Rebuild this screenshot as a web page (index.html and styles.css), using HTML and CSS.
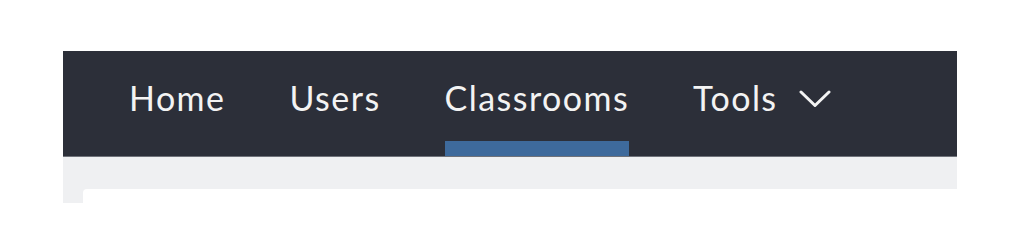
FILE: index.html
```html
<!DOCTYPE html>
<html lang="en">
<head>
<meta charset="utf-8">
<title>Classrooms</title>
<link rel="stylesheet" href="styles.css">
</head>
<body>
<div class="frame">
  <nav class="topnav">
    <a class="nav-item" href="#">Home</a>
    <a class="nav-item" href="#">Users</a>
    <a class="nav-item active" href="#">Classrooms</a>
    <a class="nav-item dropdown" href="#">Tools
      <svg class="chevron" viewBox="0 0 32 18" width="32" height="18" aria-hidden="true">
        <path d="M2 2 L16 15.5 L30 2" fill="none" stroke="currentColor" stroke-width="3" stroke-linecap="round" stroke-linejoin="round"/>
      </svg>
    </a>
  </nav>
  <main class="content">
    <div class="card"></div>
  </main>
</div>
</body>
</html>
```
FILE: styles.css
```css
html, body {
  margin: 0;
  padding: 0;
  background: #ffffff;
}
body {
  padding: 51px 0 0 63px;
  font-family: Lato, "Noto Sans", sans-serif;
}
.frame {
  width: 894px;
  height: 152px;
  overflow: hidden;
  display: flex;
  flex-direction: column;
}
.topnav {
  flex: 0 0 auto;
  height: 105px;
  background: #2c2f39;
  border-bottom: 1px solid #6f727a;
  display: flex;
  align-items: stretch;
  gap: 64px;
  padding-left: 66px;
}
.nav-item {
  display: flex;
  align-items: flex-start;
  gap: 21px;
  padding-top: 27px;
  box-sizing: border-box;
  height: 100%;
  border-bottom: 15px solid transparent;
  color: #f3f3f3;
  text-decoration: none;
  font-size: 34px;
  line-height: 40px;
  letter-spacing: 1.45px;
  font-weight: 400;
}
.nav-item.active {
  border-bottom-color: #3e6a9c;
}
.chevron {
  margin-top: 12px;
}
.content {
  flex: 1 1 auto;
  background: #eff0f2;
  padding: 32px 0 0 20px;
}
.card {
  height: 100%;
  background: #ffffff;
  border-top-left-radius: 4px;
  margin-right: -20px;
}
```
